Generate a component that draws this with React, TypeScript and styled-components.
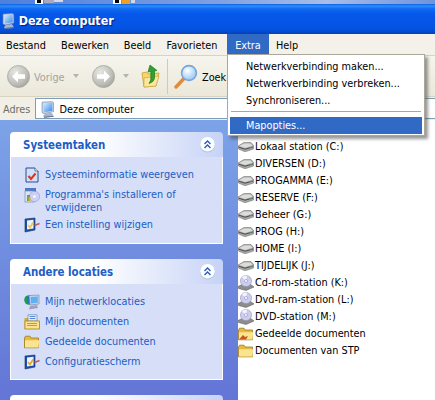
import React from "react";
import styled, { createGlobalStyle } from "styled-components";

const Global = createGlobalStyle`
  html, body { margin: 0; padding: 0; background: #fff; overflow: hidden; }
  * { box-sizing: border-box; }
`;

const FONT = `"DejaVu Sans Condensed", "DejaVu Sans", sans-serif`;

const Win = styled.div`
  position: relative;
  width: 435px;
  height: 400px;
  overflow: hidden;
  font-family: ${FONT};
  font-stretch: condensed;
  font-size: 10.8px;
  display: flex;
  flex-direction: column;
`;

const Wallpaper = styled.svg`
  display: block;
  flex: none;
`;

const TitleBar = styled.div`
  flex: none;
  height: 30px;
  display: flex;
  align-items: center;
  gap: 4px;
  padding: 3px 0 0 2px;
  background: linear-gradient(
    to bottom,
    #0a5fe0 0,
    #2f8dfb 2px,
    #1068f0 5px,
    #0558ea 10px,
    #0555e6 20px,
    #0350dc 26px,
    #0341b8 30px
  );
`;

const TitleText = styled.span`
  color: #fff;
  font-weight: bold;
  font-size: 12.4px;
  text-shadow: 1px 1px 1px #0a1f80;
`;

const MenuBar = styled.div`
  flex: none;
  height: 22px;
  display: flex;
  background: #f3f1e9;
  border-bottom: 1px solid #d9d4c2;
`;

const MenuItem = styled.div<{ $active?: boolean; $w: number }>`
  width: ${(p) => p.$w}px;
  height: 21px;
  padding-top: 1px;
  display: flex;
  align-items: center;
  justify-content: center;
  color: ${(p) => (p.$active ? "#fff" : "#000")};
  background: ${(p) => (p.$active ? "#316ac5" : "transparent")};
`;

const Toolbar = styled.div`
  flex: none;
  height: 41px;
  display: flex;
  align-items: center;
  padding-left: 7px;
  background: linear-gradient(to bottom, #f6f5ee, #ebe8da);
  border-bottom: 1px solid #d8d4c3;
`;

const BackLabel = styled.span`
  width: 30px;
  margin: 2px 0 0 4px;
  white-space: nowrap;
  color: #a3a39b;
`;

const SearchLabel = styled.span`
  margin: 2px 0 0 3px;
  color: #000;
`;

const Caret = styled.span<{ $gap: number }>`
  width: 0;
  height: 0;
  margin: 0 0 0 ${(p) => p.$gap}px;
  border-left: 3.5px solid transparent;
  border-right: 3.5px solid transparent;
  border-top: 4px solid #b4b4ac;
`;

const ToolSpacer = styled.span`
  width: 13px;
`;

const ToolSep = styled.span`
  width: 1px;
  height: 35px;
  margin: 0 6px 0 7px;
  background: #cfcbb9;
`;

const AddressBar = styled.div`
  flex: none;
  height: 23px;
  padding: 1px 0;
  display: flex;
  align-items: stretch;
  background: #f1efe6;
`;

const AddressLabel = styled.span`
  width: 35px;
  padding: 1px 0 0 3px;
  display: flex;
  align-items: center;
  color: #6f6f66;
`;

const AddressField = styled.div`
  flex: 1;
  display: flex;
  align-items: center;
  gap: 5px;
  padding: 1px 0 0 5px;
  background: #fff;
  border: 1px solid #7f9db9;
  border-right: none;
`;

const Body = styled.div`
  flex: 1;
  min-height: 0;
  display: flex;
`;

const Sidebar = styled.aside`
  flex: none;
  width: 238px;
  padding: 12px 15px 0 10px;
  display: flex;
  flex-direction: column;
  gap: 15px;
  background: linear-gradient(to bottom, #7ca3e8, #6375d6);
`;

const Panel = styled.section`
  flex: none;
`;

const PanelHeader = styled.header`
  height: 25px;
  padding: 0 7px 0 13px;
  display: flex;
  align-items: center;
  justify-content: space-between;
  border-radius: 4px 4px 0 0;
  background: linear-gradient(to right, #fff 40%, #c6d3f7);
  color: #215dc6;
  font-weight: bold;
  font-size: 11.4px;
`;

const PanelBody = styled.div<{ $h: number }>`
  height: ${(p) => p.$h}px;
  padding: 8px 8px 0 12px;
  display: flex;
  flex-direction: column;
  background: #d6dff7;
  border: 1px solid #fff;
  border-top: none;
`;

const TaskRow = styled.a<{ $wrap?: boolean }>`
  display: flex;
  gap: 4px;
  color: #215dc6;
  line-height: 13px;
  padding: 3px 0 ${(p) => (p.$wrap ? "1px" : "4px")};
`;

const TaskIcon = styled.span`
  flex: none;
  width: 18px;
  height: 16px;
  margin: -1px 0 -2px;
  display: flex;
  align-items: center;
  justify-content: center;
`;

const Files = styled.main`
  flex: 1;
  padding-top: 18px;
  background: #fff;
  display: flex;
  flex-direction: column;
`;

const FileRow = styled.div`
  height: 17px;
  display: flex;
  align-items: center;
  gap: 1px;
  color: #000;
  white-space: nowrap;
`;

const Popup = styled.div`
  position: absolute;
  left: 227px;
  top: 54px;
  width: 198px;
  height: 82px;
  padding: 3px 2px 2px;
  background: #fff;
  border: 1px solid #aca899;
  box-shadow: 3px 3px 3px rgba(70, 70, 70, 0.55);
  display: flex;
  flex-direction: column;
`;

const PopupItem = styled.div<{ $active?: boolean }>`
  height: 17px;
  flex: none;
  padding-left: 16px;
  display: flex;
  align-items: center;
  white-space: nowrap;
  color: ${(p) => (p.$active ? "#fff" : "#000")};
  background: ${(p) => (p.$active ? "#316ac5" : "transparent")};
`;

const PopupSep = styled.div`
  height: 1px;
  flex: none;
  margin: 2px 1px 5px;
  background: #aca899;
`;

const IconSlot = styled.span`
  flex: none;
  width: 16px;
  display: flex;
  justify-content: center;
`;

/* ---------- icons ---------- */

const Computer = ({ size = 16 }: { size?: number }) => (
  <svg width={size * 0.8} height={size} viewBox="0 0 13 16">
    <defs>
      <linearGradient id="scr" x1="0" y1="0" x2="1" y2="1">
        <stop offset="0" stopColor="#d5efff" />
        <stop offset="1" stopColor="#3a86e8" />
      </linearGradient>
    </defs>
    <path d="M1 1 L10 0.5 Q12 .5 12 2 L12 10 L3.5 12 L1 11 Z" fill="#c9d4e6" stroke="#6f85b0" strokeWidth=".6" />
    <path d="M2.5 2 L10.8 1.5 L10.8 9.2 L3 10.6 Z" fill="url(#scr)" />
    <path d="M4 12 L10 11 L11.5 13 L12 15 L3 15.8 L2 14 Z" fill="#aab3c8" />
    <path d="M3 15 L12 14.2 L12 15 L3 15.8Z" fill="#5b6788" />
  </svg>
);

const Back = ({ flip }: { flip?: boolean }) => (
  <svg width="23" height="23" viewBox="0 0 23 23">
    <defs>
      <radialGradient id="grayBtn" cx=".35" cy=".3" r=".8">
        <stop offset="0" stopColor="#e6e6e2" />
        <stop offset=".7" stopColor="#bdbdb8" />
        <stop offset="1" stopColor="#9d9d98" />
      </radialGradient>
    </defs>
    <circle cx="11.5" cy="11.5" r="11" fill="url(#grayBtn)" stroke="#a6a6a0" strokeWidth=".8" />
    <g transform={flip ? "matrix(-1 0 0 1 23 0)" : undefined}>
      <path d="M5 11.5 L11 5.5 L11 9.3 L18 9.3 L18 13.7 L11 13.7 L11 17.5 Z" fill="#fff" />
    </g>
  </svg>
);

const UpFolderSvg = styled.svg`
  margin-left: 12px;
`;

const UpFolder = () => (
  <UpFolderSvg width="19" height="24" viewBox="0 0 19 24">
    <path d="M1 9 L6 8 L7 10 L18 9 L15 22 L3 23 Z" fill="#f6d56f" stroke="#c9a02c" strokeWidth=".8" />
    <path d="M3 14 L18 12 L15 22 L3 23 Z" fill="#fbe6a0" stroke="#c9a02c" strokeWidth=".6" />
    <path d="M9 1 L16 6.5 L13.5 7 L13.5 14 Q13 18 8 19.5 Q10.5 16 9.8 13 L9.8 7.5 L7 8 Z" fill="#2fa12d" stroke="#156d18" strokeWidth=".6" />
  </UpFolderSvg>
);

const Magnifier = () => (
  <svg width="25" height="25" viewBox="0 0 25 25">
    <defs>
      <radialGradient id="lens" cx=".4" cy=".35" r=".7">
        <stop offset="0" stopColor="#fff" />
        <stop offset="1" stopColor="#8cc4f4" />
      </radialGradient>
    </defs>
    <path d="M2 23 L10 14.5" stroke="#e08a3c" strokeWidth="3.4" strokeLinecap="round" />
    <circle cx="15" cy="9" r="7.4" fill="url(#lens)" stroke="#7ca3d6" strokeWidth="1.6" />
  </svg>
);

const Chevron = () => (
  <svg width="17" height="17" viewBox="0 0 17 17">
    <circle cx="8.5" cy="9" r="7.5" fill="#a9b8dc" opacity=".6" />
    <circle cx="8.5" cy="8.2" r="7.2" fill="#fff" />
    <path d="M5.5 8 L8.5 5 L11.5 8 M5.5 12 L8.5 9 L11.5 12" fill="none" stroke="#215dc6" strokeWidth="1.4" />
  </svg>
);

const Hdd = () => (
  <svg width="16" height="10" viewBox="0 0 16 10">
    <path d="M0 4 L6 .5 L13 .5 L16 4 L15.5 7 L7 9.8 L.5 7 Z" fill="#a8a8a8" stroke="#666" strokeWidth=".5" />
    <path d="M1 4 L6 1.5 L12.5 1.5 L14.5 3.8 L7 6 Z" fill="#dcdcdc" />
    <path d="M.8 5.2 L7 7.2 L15 5" fill="none" stroke="#4d4d4d" strokeWidth="1" />
    <circle cx="13" cy="5.8" r=".7" fill="#3fd14a" />
  </svg>
);

const CdDrive = () => (
  <svg width="16" height="16" viewBox="0 0 16 16">
    <path d="M0 11.5 L5 9 L12 9 L16 12 L8 15.5 L.5 13.5 Z" fill="#8d8d8d" stroke="#555" strokeWidth=".5" />
    <circle cx="8" cy="6" r="5.6" fill="#ccccee" stroke="#8b8bb0" strokeWidth=".5" />
    <path d="M4 2.5 A5.5 5.5 0 0 1 9 .7 L8 6 Z" fill="#f4f4ff" />
    <circle cx="8" cy="6" r="1.5" fill="#fff" stroke="#7a7aa0" strokeWidth=".5" />
  </svg>
);

const Folder = ({ shared }: { shared?: boolean }) => (
  <svg width="16" height="14" viewBox="0 0 16 14">
    <path d="M.5 3 L1.5 1.2 L6 1.2 L7 3 L14.5 3 L14.5 12.8 L.5 12.8 Z" fill="#e8b93f" stroke="#9a7a1c" strokeWidth=".8" />
    <path d="M1 5.2 L15.2 5.2 L14.5 12.6 L1 12.6 Z" fill="#fbe48f" />
    {shared && <path d="M1 12.6 L5 8 L7 10 L10 9 L8 12.6 Z" fill="#c8551e" />}
  </svg>
);

const SysInfo = () => (
  <svg width="14" height="16" viewBox="0 0 14 16">
    <path d="M1 1 L10 1 L13 4 L13 15 L1 15 Z" fill="#cfe0f8" stroke="#2a4d8c" strokeWidth="1" />
    <path d="M10 1 L10 4 L13 4" fill="#fff" stroke="#2a4d8c" strokeWidth=".7" />
    <path d="M3.5 9 L6 12 L10.5 6.5" fill="none" stroke="#e0311a" strokeWidth="2" />
  </svg>
);

const Programs = () => (
  <svg width="16" height="16" viewBox="0 0 16 16">
    <rect x="1" y="1" width="11" height="4" fill="#4b78c8" />
    <rect x="1" y="4" width="9" height="11" fill="#dce2f0" stroke="#7d8cb2" strokeWidth=".7" />
    <circle cx="10.5" cy="9.5" r="5.2" fill="#ccd0f4" stroke="#8a8ec0" strokeWidth=".5" />
    <circle cx="10.5" cy="9.5" r="1.3" fill="#fff" />
    <rect x="3" y="8" width="3" height="6" fill="#4caf50" />
    <rect x="4.5" y="10" width="2" height="4" fill="#e0a52a" />
  </svg>
);

const Settings = ({ tick = "#e7c85a" }: { tick?: string }) => (
  <svg width="16" height="16" viewBox="0 0 16 16">
    <path d="M1 2 L11 1 L11 13 L1 15 Z" fill="#1d4fa8" stroke="#13346f" strokeWidth=".6" />
    <path d="M3 3.5 L9.5 2.8 L9.5 11.5 L3 12.5 Z" fill="#eef3fb" />
    <path d="M4 8 L6 10.5 L9 5.5" fill="none" stroke={tick} strokeWidth="1.6" />
    <path d="M10.5 8.5 L15.5 6.5" stroke="#c05a5a" strokeWidth="1.4" />
  </svg>
);

const Network = () => (
  <svg width="16" height="16" viewBox="0 0 16 16">
    <circle cx="5" cy="6" r="4.8" fill="#1f9c4a" />
    <path d="M2 3 Q5 6 4 9 L7 9 Q9 6 6 2 Z" fill="#2c6bd2" />
    <path d="M5 1.5 L15 1 L15 10 L6 11 Z" fill="#c5d8f4" stroke="#6a80a8" strokeWidth=".6" />
    <path d="M6.5 3 L13.8 2.4 L13.8 8.8 L7 9.6 Z" fill="#5fb0f0" />
    <path d="M6 12 L13 11 L14 14 L5 15.5 Z" fill="#a0a0c0" />
  </svg>
);

const Docs = () => (
  <svg width="16" height="16" viewBox="0 0 16 16">
    <path d="M.5 4 L4 4 L4 15 L.5 15 Z" fill="#d9a93a" />
    <path d="M4 .8 L13 .8 L13 7 L4 7 Z" fill="#eef4fc" stroke="#5f80b8" strokeWidth=".7" />
    <path d="M5.5 2.6 H11.5 M5.5 4.6 H11.5" stroke="#4f85d0" strokeWidth="1" />
    <rect x="1" y="7" width="14.5" height="8" fill="#fbe390" stroke="#a8841f" strokeWidth=".8" />
    <path d="M3 9.5 H13 M3 11.5 H13" stroke="#7aa2d8" strokeWidth="1" />
  </svg>
);

/* ---------- data ---------- */

const menu = [
  { label: "Bestand", w: 52 },
  { label: "Bewerken", w: 66 },
  { label: "Beeld", w: 39 },
  { label: "Favorieten", w: 70 },
  { label: "Extra", w: 42, active: true },
  { label: "Help", w: 36 },
];

const drives = [
  "Lokaal station (C:)",
  "DIVERSEN (D:)",
  "PROGAMMA (E:)",
  "RESERVE (F:)",
  "Beheer (G:)",
  "PROG (H:)",
  "HOME (I:)",
  "TIJDELIJK (J:)",
];
const cds = ["Cd-rom-station (K:)", "Dvd-ram-station (L:)", "DVD-station (M:)"];

export default function App() {
  return (
    <Win>
      <Global />
      <Wallpaper width="435" height="4" viewBox="0 0 435 4">
        <defs>
          <linearGradient id="wall" x1="0" x2="1" y1="0" y2="0">
            <stop offset="0" stopColor="#4f7fdc" />
            <stop offset=".5" stopColor="#7fa0e0" />
            <stop offset=".75" stopColor="#a8bde8" />
            <stop offset="1" stopColor="#6f93dc" />
          </linearGradient>
        </defs>
        <rect width="435" height="4" fill="url(#wall)" />
        <rect x="35" width="8" height="4" fill="#fff" />
        <rect x="37" width="4" height="3" fill="#000" />
        <rect x="44" width="10" height="3" fill="#a8a8c0" />
        <rect x="54" width="9" height="2" fill="#d8d8e0" />
        <rect x="113" width="8" height="4" fill="#fff" />
        <rect x="115" width="4" height="3" fill="#000" />
        <rect x="122" width="8" height="4" fill="#f0a020" />
        <rect x="131" width="4" height="3" fill="#d0d8e8" />
      </Wallpaper>
      <TitleBar>
        <Computer size={16} />
        <TitleText>Deze computer</TitleText>
      </TitleBar>
      <MenuBar>
        {menu.map((m) => (
          <MenuItem key={m.label} $active={m.active} $w={m.w}>
            {m.label}
          </MenuItem>
        ))}
      </MenuBar>
      <Toolbar>
        <Back />
        <BackLabel>Vorige</BackLabel>
        <Caret $gap={9} />
        <ToolSpacer />
        <Back flip />
        <Caret $gap={8} />
        <UpFolder />
        <ToolSep />
        <Magnifier />
        <SearchLabel>Zoek</SearchLabel>
      </Toolbar>
      <AddressBar>
        <AddressLabel>Adres</AddressLabel>
        <AddressField>
          <Computer size={17} />
          Deze computer
        </AddressField>
      </AddressBar>
      <Body>
        <Sidebar>
          <Panel>
            <PanelHeader>
              Systeemtaken
              <Chevron />
            </PanelHeader>
            <PanelBody $h={87}>
              <TaskRow>
                <TaskIcon><SysInfo /></TaskIcon>
                Systeeminformatie weergeven
              </TaskRow>
              <TaskRow $wrap>
                <TaskIcon><Programs /></TaskIcon>
                <span>Programma's installeren of verwijderen</span>
              </TaskRow>
              <TaskRow>
                <TaskIcon><Settings tick="#e7c85a" /></TaskIcon>
                Een instelling wijzigen
              </TaskRow>
            </PanelBody>
          </Panel>
          <Panel>
            <PanelHeader>
              Andere locaties
              <Chevron />
            </PanelHeader>
            <PanelBody $h={96}>
              <TaskRow>
                <TaskIcon><Network /></TaskIcon>
                Mijn netwerklocaties
              </TaskRow>
              <TaskRow>
                <TaskIcon><Docs /></TaskIcon>
                Mijn documenten
              </TaskRow>
              <TaskRow>
                <TaskIcon><Folder /></TaskIcon>
                Gedeelde documenten
              </TaskRow>
              <TaskRow>
                <TaskIcon><Settings tick="#e0a52a" /></TaskIcon>
                Configuratiescherm
              </TaskRow>
            </PanelBody>
          </Panel>
          <Panel>
            <PanelHeader />
          </Panel>
        </Sidebar>
        <Files>
          {drives.map((d) => (
            <FileRow key={d}><IconSlot><Hdd /></IconSlot>{d}</FileRow>
          ))}
          {cds.map((d) => (
            <FileRow key={d}><IconSlot><CdDrive /></IconSlot>{d}</FileRow>
          ))}
          <FileRow><IconSlot><Folder shared /></IconSlot>Gedeelde documenten</FileRow>
          <FileRow><IconSlot><Folder /></IconSlot>Documenten van STP</FileRow>
        </Files>
      </Body>
      <Popup>
        <PopupItem>Netwerkverbinding maken...</PopupItem>
        <PopupItem>Netwerkverbinding verbreken...</PopupItem>
        <PopupItem>Synchroniseren...</PopupItem>
        <PopupSep />
        <PopupItem $active>Mapopties...</PopupItem>
      </Popup>
    </Win>
  );
}
